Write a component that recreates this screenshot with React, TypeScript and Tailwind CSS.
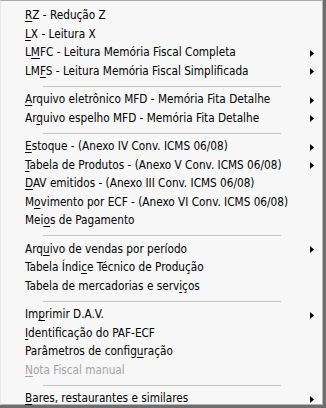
type Item = { label: string; u: number; sub?: boolean; disabled?: boolean } | 'sep';

const items: Item[] = [
  { label: 'RZ - Redução Z', u: 0 },
  { label: 'LX - Leitura X', u: 0 },
  { label: 'LMFC - Leitura Memória Fiscal Completa', u: 1, sub: true },
  { label: 'LMFS - Leitura Memória Fiscal Simplificada', u: 2, sub: true },
  'sep',
  { label: 'Arquivo eletrônico MFD - Memória Fita Detalhe', u: 0, sub: true },
  { label: 'Arquivo espelho MFD - Memória Fita Detalhe', u: 2, sub: true },
  'sep',
  { label: 'Estoque - (Anexo IV Conv. ICMS 06/08)', u: 0, sub: true },
  { label: 'Tabela de Produtos - (Anexo V Conv. ICMS 06/08)', u: 0, sub: true },
  { label: 'DAV emitidos - (Anexo III Conv. ICMS 06/08)', u: 0 },
  { label: 'Movimento por ECF - (Anexo VI Conv. ICMS 06/08)', u: 1 },
  { label: 'Meios de Pagamento', u: 3 },
  'sep',
  { label: 'Arquivo de vendas por período', u: 3, sub: true },
  { label: 'Tabela Índice Técnico de Produção', u: 11 },
  { label: 'Tabela de mercadorias e serviços', u: 28 },
  'sep',
  { label: 'Imprimir D.A.V.', u: 2, sub: true },
  { label: 'Identificação do PAF-ECF', u: 0 },
  { label: 'Parâmetros de configuração', u: 20 },
  { label: 'Nota Fiscal manual', u: 0, disabled: true },
  'sep',
  { label: 'Bares, restaurantes e similares', u: 0, sub: true },
];

export default function App() {
  return (
    <div className="w-[326px] h-[408px] bg-[#6e6e6e] pr-[3px] pb-[3px]">
      <div
        className="h-full bg-[#f7f7f7] border-t border-t-[#a8a8a8] border-l border-l-[#e8e8e8] border-r border-r-[#b4b4b4] border-b border-b-[#b4b4b4] pt-[6px] text-[11.7px] leading-none text-black"
        style={{ fontFamily: '"DejaVu Sans Condensed", "DejaVu Sans", sans-serif' }}
      >
        {items.map((it, i) =>
          it === 'sep' ? (
            <div key={i} className="h-[10px] flex items-center">
              <div className="ml-[42px] w-[238px] h-px bg-[#c5c5c5]" />
            </div>
          ) : (
            <div key={i} className={`h-[18.5px] flex items-center pl-[24px] pr-[8px] ${it.disabled ? 'text-[#a3a3a3]' : ''}`}>
              <span className="flex-1 whitespace-nowrap">
                {it.label.slice(0, it.u)}
                <span className="underline underline-offset-2">{it.label[it.u]}</span>
                {it.label.slice(it.u + 1)}
              </span>
              {it.sub && (
                <svg width="4" height="7" viewBox="0 0 4 7">
                  <path d="M0 0 L4 3.5 L0 7 Z" fill="#000" />
                </svg>
              )}
            </div>
          )
        )}
      </div>
    </div>
  );
}
